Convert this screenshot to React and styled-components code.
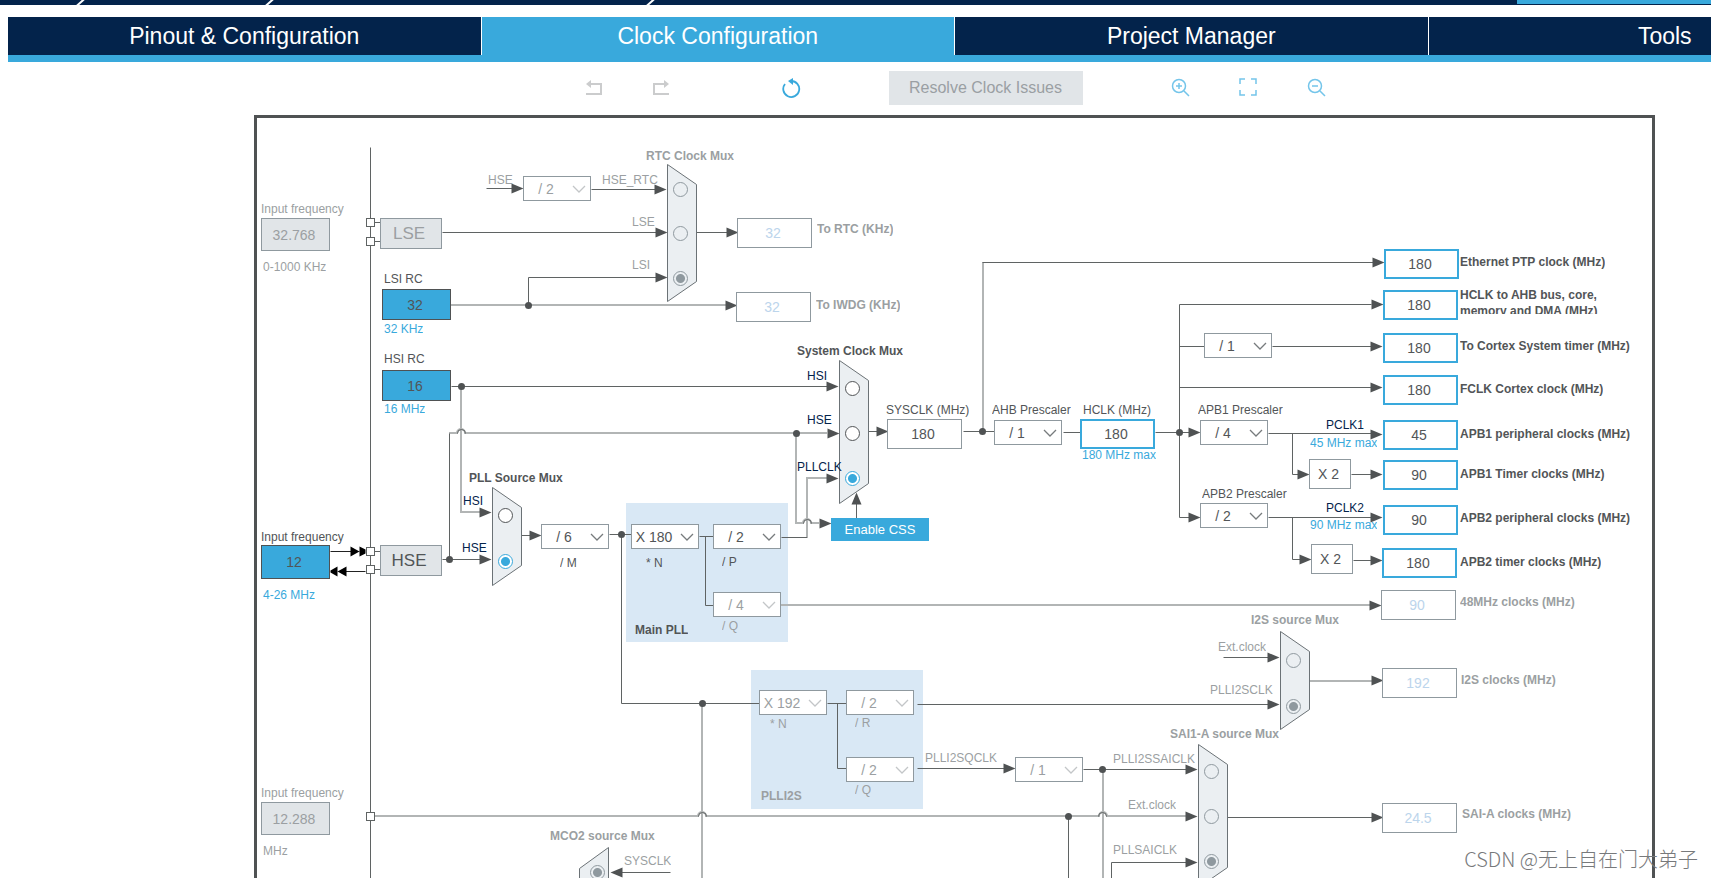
import React, { useState } from "react";
import styled, { createGlobalStyle, css } from "styled-components";

const colors = {
  navy: "#03234b",
  blue: "#39a9dc",
  wire: "#5f6363",
  softWire: "#b2b5b5",
  solid: "#4f5253",
  text: "#525557",
  muted: "#9b9fa2",
  faded: "#bcd5ec",
  border: "#8f999f",
  grey: "#e1e5e8",
  mux: "#ebeff2",
  panel: "#d9e8f5",
};

// top left corner of the board inside the sheet; all coordinates below are sheet ones
const ORIGIN = { x: 257, y: 118 };

const GlobalStyle = createGlobalStyle`
  *, *::before, *::after {
    box-sizing: border-box;
  }
  body {
    margin: 0;
    background: #fff;
    overflow: hidden;
    font-family: "Liberation Sans", Arial, sans-serif;
  }
  button, input, select {
    font-family: inherit;
  }
`;

const Page = styled.div`
  position: relative;
  display: flex;
  flex-direction: column;
  height: 100vh;
  overflow: hidden;
`;

const CrumbStrip = styled.div`
  display: flex;
  flex: none;
  height: 5px;
  background: ${colors.navy};
  overflow: hidden;
`;

const Crumb = styled.div`
  width: ${({ $width }) => $width}px;
  display: flex;
  justify-content: flex-end;
  &::after {
    content: "";
    width: 3px;
    background: #fff;
    transform: skewX(-48deg);
  }
`;

const GenerateStrip = styled.div`
  flex: 0 0 194px;
  margin-left: auto;
  height: 4px;
  background: ${colors.blue};
`;

const Workspace = styled.main`
  display: flex;
  flex-direction: column;
  flex: 1;
  min-width: 1895px;
  margin: 12px 0 0 7px;
`;

const Tabs = styled.nav`
  display: grid;
  grid-template-columns: repeat(4, 1fr);
  margin-left: 1px;
  border-bottom: 7px solid ${colors.blue};
`;

const Tab = styled.button`
  height: 38px;
  border: none;
  border-right: 1px solid #fff;
  padding: 0;
  font-size: 23px;
  color: #fff;
  cursor: pointer;
  background: ${({ $active }) => ($active ? colors.blue : colors.navy)};
`;

const Toolbar = styled.div`
  display: flex;
  justify-content: center;
  align-items: center;
  gap: 88px;
  padding: 9px 0 10px;
`;

const ToolGroup = styled.div`
  display: flex;
  gap: 48px;
  margin-right: ${({ $space }) => $space || 0}px;
`;

const IconButton = styled.button`
  display: flex;
  width: 20px;
  height: 20px;
  padding: 0;
  border: none;
  background: none;
  color: ${({ disabled, $light }) =>
    disabled ? "#cbcccd" : $light ? "#74c5ea" : colors.blue};
`;

const ResolveButton = styled.button`
  width: 194px;
  height: 34px;
  padding: 0;
  border: none;
  font-size: 16px;
  color: #9a9fa3;
  background: ${colors.grey};
`;

const Board = styled.section`
  position: relative;
  flex: 1;
  align-self: center;
  width: 1401px;
  border: 3px solid ${colors.solid};
  border-bottom: none;
  overflow: hidden;
`;

const Drawing = styled.svg`
  position: absolute;
  inset: 0;
  width: 100%;
  height: 100%;
`;

const placed = css`
  position: absolute;
  left: ${({ $x }) => $x - ORIGIN.x}px;
  top: ${({ $y }) => $y - ORIGIN.y}px;
`;

const Panel = styled.div`
  ${placed}
  width: ${({ $width }) => $width}px;
  height: 139px;
  background: ${colors.panel};
`;

const Caption = styled.label`
  ${placed}
  max-height: ${({ $clip }) => ($clip ? "27px" : "none")};
  overflow: hidden;
  font-size: 12px;
  line-height: 16px;
  white-space: pre;
  font-weight: ${({ $bold }) => ($bold ? "bold" : "normal")};
  color: ${({ $tone }) => colors[$tone || "text"]};
`;

const Value = styled.input`
  ${placed}
  width: 75px;
  height: 30px;
  padding: 0 3px 0 0;
  text-align: center;
  font-size: 14px;
  outline: none;
  border-radius: 0;
  color: ${({ disabled }) => (disabled ? colors.faded : colors.text)};
  background: #fff;
  border: ${({ $target }) =>
    $target ? `2px solid ${colors.blue}` : `1px solid ${colors.border}`};
`;

const Frequency = styled.input`
  ${placed}
  width: 69px;
  height: ${({ $height }) => $height}px;
  padding: 0 3px 0 0;
  text-align: center;
  font-size: 14px;
  outline: none;
  border-radius: 0;
  color: ${({ disabled }) => (disabled ? colors.muted : colors.text)};
  background: ${({ disabled }) => (disabled ? colors.grey : colors.blue)};
  border: 1px solid
    ${({ disabled }) => (disabled ? colors.border : colors.solid)};
`;

const Oscillator = styled.div`
  ${placed}
  width: 62px;
  height: 31px;
  padding-right: 4px;
  border: 1px solid ${colors.border};
  background: ${colors.grey};
  font-size: 17px;
  line-height: 29px;
  text-align: center;
  color: ${({ $off }) => ($off ? colors.muted : colors.text)};
`;

const Multiplier = styled.div`
  ${placed}
  width: 42px;
  height: 30px;
  padding-right: 3px;
  border: 1px solid ${colors.border};
  background: #fff;
  font-size: 14px;
  line-height: 28px;
  text-align: center;
  color: ${colors.text};
`;

const SelectBox = styled.div`
  ${placed}
  width: 68px;
  height: 25px;
  svg {
    position: absolute;
    right: 5px;
    top: 9px;
    pointer-events: none;
  }
`;

const Select = styled.select`
  appearance: none;
  width: 100%;
  height: 100%;
  padding: 0 22px 0 0;
  border: 1px solid ${colors.border};
  border-radius: 0;
  background: #fff;
  font-size: 14px;
  text-align: center;
  text-align-last: center;
  opacity: 1;
  color: ${({ disabled }) => (disabled ? colors.muted : colors.text)};
`;

const Radio = styled.input`
  ${placed}
  appearance: none;
  width: 15px;
  height: 15px;
  margin: 0;
  border: 1px solid ${colors.text};
  border-radius: 50%;
  background: #fff;
  &:checked {
    border-color: ${colors.blue};
    background: radial-gradient(${colors.blue} 4px, #fff 5px);
  }
  &:disabled {
    border-color: ${colors.border};
    background-color: ${colors.mux};
  }
  &:disabled:checked {
    background: radial-gradient(${colors.border} 4px, ${colors.mux} 5px);
  }
`;

const CssButton = styled.button`
  ${placed}
  width: 98px;
  height: 23px;
  padding: 0;
  border: none;
  background: ${colors.blue};
  color: #fff;
  font-size: 13px;
`;

const Watermark = styled.div`
  position: absolute;
  right: 13px;
  bottom: 4px;
  font: 300 20px/30px "Noto Sans CJK SC", sans-serif;
  color: #77797b;
`;

const wires = [
  "M370 147V900",
  "M374 222H380M374 241H380M374 551H380M374 569H380",
  "M486 188H514",
  "M591 189H655",
  "M442 232H656",
  "M528 305V277H656",
  "M696 232H728",
  "M451 386H827",
  "M449 559V433",
  "M442 559H480",
  "M521 535H530",
  "M609 534H631",
  "M621 534V703H759",
  "M699 536H713M705 536V605H713",
  "M781 537H807",
  "M868 431H878",
  "M963 431H994",
  "M1063 432H1080",
  "M982 262H1373",
  "M1155 432H1192",
  "M1371 304H1179V517H1191",
  "M1179 346H1204M1272 346H1371",
  "M1179 387H1371",
  "M1268 433H1371M1292 433V474H1301",
  "M1351 474H1371",
  "M1268 517H1371M1292 517V559H1303",
  "M1353 560H1371",
  "M856 518V503",
  "M1223 657H1268",
  "M917 704H1268",
  "M917 768H1005",
  "M827 703H846M837 703V768H846",
  "M1083 769H1186",
  "M1068 816V900",
  "M1111 900V862H1186",
  "M1227 817H1373",
  "M621 872H670",
];

const softWires = [
  "M451 305H727",
  "M461 386V512H480",
  "M449 433H457A4 4 0 0 1 465 433H827",
  "M796 433V523H803A4 4 0 0 1 811 523H819",
  "M807 537V478H827",
  "M983 431V262",
  "M781 605H1371",
  "M374 816H698A4 4 0 0 1 706 816H1099A4 4 0 0 1 1107 816H1186",
  "M702 703V900",
  "M1103 770V900",
  "M1310 681H1372",
];

// [tip x, tip y]
const arrows = [
  [523, 188], [666, 189], [667, 232], [667, 277], [738, 232], [737, 305],
  [838, 386], [839, 433], [838, 478], [491, 512], [491, 559], [541, 535],
  [831, 523], [888, 431], [1384, 262], [1383, 304], [1382, 346], [1382, 387],
  [1200, 432], [1200, 517], [1382, 434], [1309, 474], [1382, 474], [1382, 517],
  [1311, 559], [1382, 560], [1381, 605], [1279, 657], [1279, 704], [1383, 680],
  [1015, 768], [1197, 769], [1197, 816], [1197, 862], [1383, 817],
];

const joints = [
  [528, 305], [461, 386], [796, 433], [449, 559], [621, 534], [982, 431],
  [1179, 432], [702, 703], [1102, 769], [1068, 816],
];

const pins = [222, 241, 551, 569, 816];

const muxes = [
  { name: "rtc", x: 667, top: 164, bottom: 301, radios: [189, 233, 278], on: 2, off: true },
  { name: "pll-source", x: 492, top: 487, bottom: 585, radios: [515, 561], on: 1 },
  { name: "system", x: 839, top: 360, bottom: 503, radios: [388, 433, 478], on: 2 },
  { name: "i2s", x: 1280, top: 631, bottom: 729, radios: [660, 706], on: 1, off: true },
  { name: "sai1-a", x: 1198, top: 744, bottom: 887, radios: [771, 816, 861], on: 2, off: true },
];

const selects = [
  { name: "HSE RTC divider", x: 523, y: 176, value: "/ 2", off: true },
  { name: "PLL M", x: 541, y: 524, value: "/ 6" },
  { name: "PLL N", x: 631, y: 524, value: "X 180" },
  { name: "PLL P", x: 713, y: 524, value: "/ 2" },
  { name: "PLL Q", x: 713, y: 592, value: "/ 4", off: true },
  { name: "AHB Prescaler", x: 994, y: 420, value: "/ 1" },
  { name: "Cortex timer divider", x: 1204, y: 333, value: "/ 1" },
  { name: "APB1 Prescaler", x: 1200, y: 420, value: "/ 4" },
  { name: "APB2 Prescaler", x: 1200, y: 503, value: "/ 2" },
  { name: "PLLI2S N", x: 759, y: 690, value: "X 192", off: true },
  { name: "PLLI2S R", x: 846, y: 690, value: "/ 2", off: true },
  { name: "PLLI2S Q", x: 846, y: 757, value: "/ 2", off: true },
  { name: "SAI divider", x: 1015, y: 757, value: "/ 1", off: true },
];

// lx / ly: left edge and middle line of the caption
const values = [
  { id: "rtc", x: 737, y: 218, value: "32", label: "To RTC (KHz)", lx: 817, ly: 229, off: true },
  { id: "iwdg", x: 736, y: 292, value: "32", label: "To IWDG (KHz)", lx: 816, ly: 305, off: true },
  { id: "sysclk", x: 887, y: 419, value: "180", label: "SYSCLK (MHz)", lx: 886, ly: 410, plain: true },
  { id: "hclk", x: 1080, y: 419, value: "180", label: "HCLK (MHz)", lx: 1083, ly: 410, plain: true, target: true },
  { id: "eth", x: 1384, y: 249, value: "180", label: "Ethernet PTP clock (MHz)", lx: 1460, ly: 262, target: true },
  { id: "ahb", x: 1383, y: 290, value: "180", label: "HCLK to AHB bus, core,\nmemory and DMA (MHz)", lx: 1460, ly: 295, target: true, clip: true },
  { id: "cortex", x: 1383, y: 333, value: "180", label: "To Cortex System timer (MHz)", lx: 1460, ly: 346, target: true },
  { id: "fclk", x: 1383, y: 375, value: "180", label: "FCLK Cortex clock (MHz)", lx: 1460, ly: 389, target: true },
  { id: "apb1", x: 1383, y: 420, value: "45", label: "APB1 peripheral clocks (MHz)", lx: 1460, ly: 434, target: true },
  { id: "apb1t", x: 1383, y: 460, value: "90", label: "APB1 Timer clocks (MHz)", lx: 1460, ly: 474, target: true },
  { id: "apb2", x: 1383, y: 505, value: "90", label: "APB2 peripheral clocks (MHz)", lx: 1460, ly: 518, target: true },
  { id: "apb2t", x: 1382, y: 548, value: "180", label: "APB2 timer clocks (MHz)", lx: 1460, ly: 562, target: true },
  { id: "usb", x: 1381, y: 590, value: "90", label: "48MHz clocks (MHz)", lx: 1460, ly: 602, off: true },
  { id: "i2s", x: 1382, y: 668, value: "192", label: "I2S clocks (MHz)", lx: 1461, ly: 680, off: true },
  { id: "sai", x: 1382, y: 803, value: "24.5", label: "SAI-A clocks (MHz)", lx: 1462, ly: 814, off: true },
];

const frequencies = [
  { id: "lse", x: 261, y: 218, height: 33, value: "32.768", label: "Input frequency", ly: 209, range: "0-1000 KHz", ry: 267, off: true },
  { id: "hse", x: 261, y: 545, height: 34, value: "12", label: "Input frequency", ly: 537, range: "4-26 MHz", ry: 595 },
  { id: "i2sin", x: 261, y: 802, height: 33, value: "12.288", label: "Input frequency", ly: 793, range: "MHz", ry: 851, off: true },
  { id: "lsi", x: 382, y: 289, height: 31, value: "32", label: "LSI RC", ly: 279, range: "32 KHz", ry: 329 },
  { id: "hsi", x: 382, y: 370, height: 31, value: "16", label: "HSI RC", ly: 359, range: "16 MHz", ry: 409 },
];

const captions = [
  { x: 488, y: 180, text: "HSE", tone: "muted" },
  { x: 602, y: 180, text: "HSE_RTC", tone: "muted" },
  { x: 632, y: 222, text: "LSE", tone: "muted" },
  { x: 632, y: 265, text: "LSI", tone: "muted" },
  { x: 646, y: 156, text: "RTC Clock Mux", tone: "muted", bold: true },
  { x: 469, y: 478, text: "PLL Source Mux", bold: true },
  { x: 463, y: 501, text: "HSI", tone: "navy" },
  { x: 462, y: 548, text: "HSE", tone: "navy" },
  { x: 797, y: 351, text: "System Clock Mux", bold: true },
  { x: 807, y: 376, text: "HSI", tone: "navy" },
  { x: 807, y: 420, text: "HSE", tone: "navy" },
  { x: 797, y: 467, text: "PLLCLK", tone: "navy" },
  { x: 560, y: 563, text: "/ M" },
  { x: 646, y: 563, text: "* N" },
  { x: 722, y: 562, text: "/ P" },
  { x: 722, y: 626, text: "/ Q", tone: "muted" },
  { x: 635, y: 630, text: "Main PLL", bold: true },
  { x: 992, y: 410, text: "AHB Prescaler" },
  { x: 1198, y: 410, text: "APB1 Prescaler" },
  { x: 1202, y: 494, text: "APB2 Prescaler" },
  { x: 1082, y: 455, text: "180 MHz max", tone: "blue" },
  { x: 1326, y: 425, text: "PCLK1", tone: "navy" },
  { x: 1310, y: 443, text: "45 MHz max", tone: "blue" },
  { x: 1326, y: 508, text: "PCLK2", tone: "navy" },
  { x: 1310, y: 525, text: "90 MHz max", tone: "blue" },
  { x: 1251, y: 620, text: "I2S source Mux", tone: "muted", bold: true },
  { x: 1218, y: 647, text: "Ext.clock", tone: "muted" },
  { x: 1210, y: 690, text: "PLLI2SCLK", tone: "muted" },
  { x: 1170, y: 734, text: "SAI1-A source Mux", tone: "muted", bold: true },
  { x: 1113, y: 759, text: "PLLI2SSAICLK", tone: "muted" },
  { x: 1128, y: 805, text: "Ext.clock", tone: "muted" },
  { x: 1113, y: 850, text: "PLLSAICLK", tone: "muted" },
  { x: 925, y: 758, text: "PLLI2SQCLK", tone: "muted" },
  { x: 770, y: 724, text: "* N", tone: "muted" },
  { x: 855, y: 723, text: "/ R", tone: "muted" },
  { x: 855, y: 790, text: "/ Q", tone: "muted" },
  { x: 761, y: 796, text: "PLLI2S", tone: "muted", bold: true },
  { x: 550, y: 836, text: "MCO2 source Mux", tone: "muted", bold: true },
  { x: 624, y: 861, text: "SYSCLK", tone: "muted" },
];

const shift = `translate(${-ORIGIN.x} ${-ORIGIN.y})`;

const Wiring = () => (
  <Drawing aria-hidden="true">
    <g transform={shift} fill="none">
      <path d={softWires.join("")} stroke={colors.softWire} strokeWidth="2" />
      <g transform="translate(0.5 0.5)">
        <path d={wires.join("")} stroke={colors.wire} />
        <path
          d="M457 433A4 4 0 0 1 465 433M803 523A4 4 0 0 1 811 523M698 816A4 4 0 0 1 706 816M1098 816A4 4 0 0 1 1106 816"
          stroke={colors.wire}
        />
        <g fill={colors.solid}>
          {arrows.map(([x, y]) => (
            <path key={`${x}-${y}`} d={`M${x} ${y}l-12 -5v10z`} />
          ))}
          {joints.map(([x, y]) => (
            <circle key={`${x}-${y}`} cx={x} cy={y} r="3.5" />
          ))}
          <path d="M610 872l12 -5v10z" />
        </g>
        <g fill="#fff" stroke={colors.wire}>
          {pins.map((y) => (
            <rect key={y} x="366" y={y - 4} width="8" height="8" />
          ))}
        </g>
        <path d="M330 551H352M345 571H365" stroke="#222" />
        <path
          fill="#000"
          d="M350 546l9 5l-9 5zM359 546l6 3v4l-6 3zM346 566l-9 5l9 5zM337 566l-7 4v2l7 4z"
        />
        <g fill={colors.mux} stroke="#6b7276">
          {muxes.map(({ name, x, top, bottom }) => (
            <path
              key={name}
              d={`M${x} ${top}l29 20V${bottom - 20}l-29 20z`}
            />
          ))}
          <path d="M608 847l-29 21V900H608z" />
        </g>
        <path d="M856 492l-5 12h10z" fill={colors.solid} />
      </g>
    </g>
  </Drawing>
);

const Divider = ({ name, x, y, value, off }) => (
  <SelectBox $x={x} $y={y}>
    <Select aria-label={name} defaultValue={value} disabled={off}>
      <option>{value}</option>
    </Select>
    <svg width="14" height="8" fill="none" stroke={off ? "#c3c6c8" : "#777b7d"}>
      <path d="M1 1l6 6l6 -6" strokeWidth="1.3" />
    </svg>
  </SelectBox>
);

const ClockValue = ({ id, x, y, value, label, lx, ly, off, target, plain, clip }) => (
  <>
    <Value id={id} $x={x} $y={y} $target={target} value={value} disabled={off} readOnly />
    <Caption
      htmlFor={id}
      $x={lx}
      $y={ly - 8}
      $bold={!plain}
      $clip={clip}
      $tone={off ? "muted" : "text"}
    >
      {label}
    </Caption>
  </>
);

const Source = ({ id, x, y, height, value, label, ly, range, ry, off }) => (
  <>
    <Caption htmlFor={`in-${id}`} $x={x + (x > 300 ? 2 : 0)} $y={ly - 8} $tone={off ? "muted" : "text"}>
      {label}
    </Caption>
    <Frequency id={`in-${id}`} $x={x} $y={y} $height={height} defaultValue={value} disabled={off} />
    <Caption as="span" $x={x + 2} $y={ry - 8} $tone={off ? "muted" : "blue"}>
      {range}
    </Caption>
  </>
);

const tabs = ["Pinout & Configuration", "Clock Configuration", "Project Manager", "Tools"];

const App = () => {
  const [activeTab, setActiveTab] = useState(tabs[1]);

  return (
    <>
      <GlobalStyle />
      <Page>
        <CrumbStrip>
          <Crumb $width={82} />
          <Crumb $width={189} />
          <Crumb $width={381} />
          <GenerateStrip />
        </CrumbStrip>
        <Workspace>
          <Tabs>
            {tabs.map((tab) => (
              <Tab key={tab} $active={tab === activeTab} onClick={() => setActiveTab(tab)}>
                {tab}
              </Tab>
            ))}
          </Tabs>
          <Toolbar>
            <ToolGroup $space={22}>
              <IconButton aria-label="Undo" disabled>
                <svg width="20" height="20" fill="none" stroke="currentColor" strokeWidth="2">
                  <path d="M5 6H18V16H3" />
                  <path d="M8 2v8l-5 -4z" fill="currentColor" stroke="none" />
                </svg>
              </IconButton>
              <IconButton aria-label="Redo" disabled>
                <svg width="20" height="20" fill="none" stroke="currentColor" strokeWidth="2">
                  <path d="M16 6H3V16H18" />
                  <path d="M13 2v8l5 -4z" fill="currentColor" stroke="none" />
                </svg>
              </IconButton>
            </ToolGroup>
            <IconButton aria-label="Reset">
              <svg width="20" height="20" fill="none" stroke="currentColor" strokeWidth="1.8">
                <path d="M4 6A8 8 0 1 0 10 3" />
                <path d="M12 0v7l-5 -4z" fill="currentColor" stroke="none" />
              </svg>
            </IconButton>
            <ResolveButton disabled>Resolve Clock Issues</ResolveButton>
            <ToolGroup>
              <IconButton aria-label="Zoom in" $light>
                <svg width="20" height="20" fill="none" stroke="currentColor" strokeWidth="1.5">
                  <circle cx="8" cy="8" r="6.5" />
                  <path d="M13 13l5 5M5 8h6M8 5v6" />
                </svg>
              </IconButton>
              <IconButton aria-label="Fit to screen" $light>
                <svg width="20" height="20" fill="none" stroke="currentColor" strokeWidth="1.5">
                  <path d="M1 6V1H6M12 1H17V6M17 12V17H12M6 17H1V12" />
                </svg>
              </IconButton>
              <IconButton aria-label="Zoom out" $light>
                <svg width="20" height="20" fill="none" stroke="currentColor" strokeWidth="1.5">
                  <circle cx="8" cy="8" r="6.5" />
                  <path d="M13 13l5 5M5 8h6" />
                </svg>
              </IconButton>
            </ToolGroup>
          </Toolbar>
          <Board>
            <Panel $x={626} $y={503} $width={162} />
            <Panel $x={751} $y={670} $width={172} />
            <Wiring />
            {muxes.map(({ name, x, radios, on, off }) =>
              radios.map((y, i) => (
                <Radio
                  key={`${name}-${y}`}
                  type="radio"
                  name={name}
                  aria-label={`${name} mux input ${i + 1}`}
                  $x={x + 6}
                  $y={y - 7}
                  defaultChecked={i === on}
                  disabled={off}
                />
              ))
            )}
            <Radio
              type="radio"
              name="mco2"
              aria-label="mco2 mux input 1"
              $x={590}
              $y={865}
              defaultChecked
              disabled
            />
            {selects.map((item) => (
              <Divider key={item.name} {...item} />
            ))}
            {values.map((item) => (
              <ClockValue key={item.id} {...item} />
            ))}
            {frequencies.map((item) => (
              <Source key={item.id} {...item} />
            ))}
            <Oscillator $x={380} $y={218} $off>
              LSE
            </Oscillator>
            <Oscillator $x={380} $y={545}>
              HSE
            </Oscillator>
            <Multiplier $x={1309} $y={459}>
              X 2
            </Multiplier>
            <Multiplier $x={1311} $y={544}>
              X 2
            </Multiplier>
            <CssButton $x={831} $y={518}>
              Enable CSS
            </CssButton>
            {captions.map(({ x, y, text, tone, bold }) => (
              <Caption as="span" key={`${x}-${y}`} $x={x} $y={y - 8} $tone={tone} $bold={bold}>
                {text}
              </Caption>
            ))}
          </Board>
        </Workspace>
        <Watermark>CSDN @无上自在门大弟子</Watermark>
      </Page>
    </>
  );
};

export default App;
